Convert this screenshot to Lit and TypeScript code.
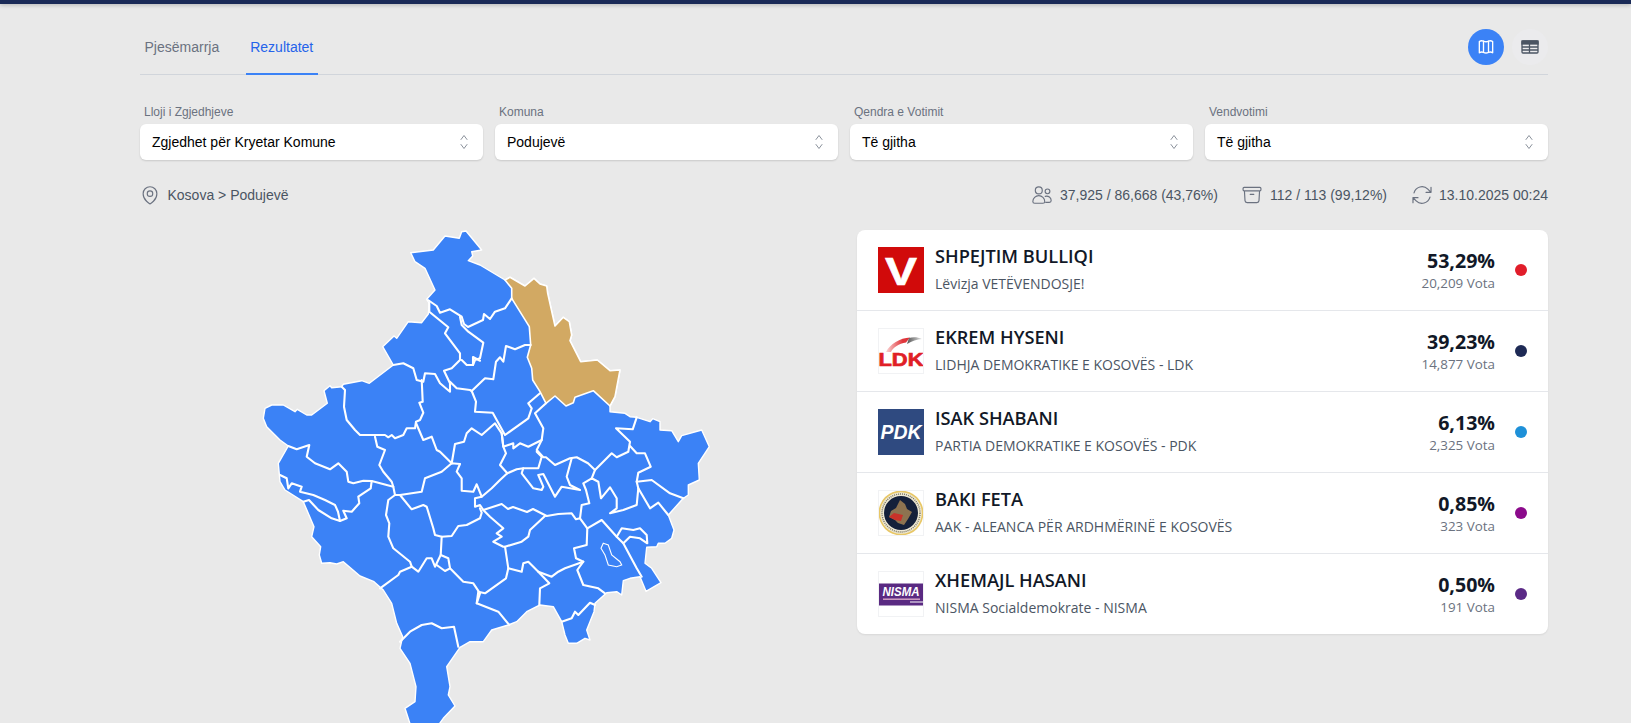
import { LitElement, html, css, svg } from "lit";
import { customElement } from "lit/decorators.js";

const OUTLINE =
  "M461.7,231.7 466,231 481.7,250 471.7,251.7 472.7,256 468.3,260.7 480,265 505,280 510,277.3 525,286 534,278.3 540,284 546.7,286 547.7,293.3 555,326 563.3,317.3 569.3,321.7 571.7,335 570,340.7 580.7,361.7 597.3,360 610,370.7 620,370 615,396.7 610,406 610,411.7 625,413.3 630,416.7 636.7,417.3 650,421.7 652.7,418.7 660,421.7 660,430 671.7,430.7 678.3,441.7 681.7,435.7 701.7,430 709.3,446.7 698.3,463.3 699.3,480 688.3,485 688.3,495 683.3,498.3 668.3,515 674,530 671.7,538.3 665,543.3 658.3,543.3 656.7,546.7 646.7,547.3 645,563.3 651.7,568.3 661,582.7 646,591.3 640,576.7 630,578.3 623.3,580.7 621.7,595 616.7,591.7 606.7,592.7 595,603.3 594,611.7 586.7,630 590,640 585,638.3 576.7,643.3 568.3,643.3 565,635 561.7,621.7 553.3,606.7 540,605 526.7,611.7 516.7,621.7 508.3,625 491.7,630 483.3,641.7 470,641.7 460,647.3 446.7,666.7 450,686.7 448.3,695 455,706 443.3,718.3 435,730 412,730 405,708.3 415,701.7 416,686.7 410,663.3 400,648.3 402.7,636.7 396.7,623.3 391.7,603.3 383.3,590 374,581.7 360,576 343.3,561.7 336.7,564 330,562.7 321.7,563.3 319.3,555 320.7,546.7 311.7,536.7 314,526.7 303.3,501.7 285,490 280,481.7 278.3,463.3 288.3,446 280,440 266.7,426.7 263.3,418.3 265,408.3 271.7,405 283.3,405 295,411.7 297.3,409.3 306.7,415 311.7,415 327.3,403.3 324,390.7 330,385.7 331.7,387.7 341.7,386.7 343.3,384.3 361.7,380.7 369.3,383.3 393.3,365 382.7,346.7 394,336 396.7,338.3 408.3,321.7 421.7,322.7 428.3,314 429.3,303.3 426.7,299.3 435,290 425,268.3 415,261.7 410.7,252.7 433.3,250 445,236 459.3,238.3 Z";

const PODUJEVE =
  "M505,280 510,277.3 525,286 534,278.3 540,284 546.7,286 547.7,293.3 555,326 563.3,317.3 569.3,321.7 571.7,335 570,340.7 580.7,361.7 597.3,360 610,370.7 620,370 615,396.7 610,406 593.3,390.7 575,397.3 573.3,402.7 566,406 555,396 546,403.3 540,391.7 532.7,380 531.7,368.3 527.3,357.3 530.7,345 529.3,326.7 511.7,298.3 511.7,288.3 Z";

// municipality borders, drawn over the silhouette
const BORDERS = [
  "M428,300 436.7,306 440,312.7 450,309.3 461.7,316.7 464,324 468,327 483,320 484,314 490,319 495,311.7 505,308.3 511.7,298.3",
  "M429.3,303 429.3,311.7 448.3,327.3 445,333.3 460,353.3 460,360 451.7,368.3 444,370.7 450,383.3 450,391.7 440,383.3 435,374 425,373.3 423.3,381.7 416.7,380 413.3,368.3 403.3,363.3 393.3,365",
  "M460,316.7 461.7,325 468.3,331.7 483.3,342.7 480,358.3 475,360 473,365 466.7,365 461.7,360",
  "M473,365 473,357 480,360.7",
  "M450,381.7 456.7,388.3 470,390 471.7,391 485,378.3 493.3,379.3 496,361.7 500,357.3 503.3,361.7 506,346 515,349.3 525,345 530.7,345",
  "M471.7,391 476,401.7 475,411.7 492.7,412.7 505,435 528.3,418.3 531.7,408.3 528.3,403.3 540,393.3",
  "M546,403.3 535,413.3 543.3,428.3 541.7,440 528.3,446.7 520,443.3 513.3,448.3 513.3,443.3 503.3,446.7 501.7,433.3 495,423.3 481.7,435 471.7,428.3 466.7,433.3 464,441.7 455,444 451.7,463.3",
  "M541.7,440 536.7,450 543.3,457.3 546,457.3 555,465 570,458.3 576.7,457.3 588,463.3 595,470 611.7,453.3 616.7,457.3 628.3,451.7 630,441.7 616,428.3 632.7,429.3 636.7,417.3",
  "M630,446 636.7,453.3 645,453.3 650.7,466.7 638.3,472.7 636.7,481.7 638.3,488.3 636.7,505 623.3,510 610,513.3 616.7,508.3 616.7,498.3 610,487.3 601,498.3 598.3,481.7 591.7,478.3 583.3,483.3 586,490 589.3,503.3 581.7,505 580,518.3",
  "M595,470 591.7,478.3",
  "M636.7,481.7 651.7,480 670,493.3 683.3,498.3",
  "M638.3,488.3 650,508.3 658.3,502.7 668.3,515",
  "M501.7,433.3 503.3,446.7 506,453.3 500,465 507.3,473.3 500,480 491.7,488.3 481.7,496.7 476.7,484.3 473.3,491.7 461.7,490.7 461.7,478.3 456.7,471.7 460,464 451.7,463.3 441.7,471.7 425,478.3 421.7,491.7 400,495 395,495 388.3,500 386,515 389.3,523.3 388.3,536.7 393.3,548.3 410,561.7 411.7,566.7 400,571.7 398.3,575 380,588.3",
  "M507.3,473.3 516.7,469.3 523.3,468.3 521.7,473.3 533.3,488.3 541.7,490 543.3,486.7 538.3,475 543.3,474 555,496.7 561.7,486.7 580,490 570,485 566.7,476.7 571.7,458.3",
  "M523.3,468.3 538.3,468.3 541.7,456.7 536.7,451.7",
  "M481.7,496.7 475,498.3 475,506.7 480,505 483.3,510 501.7,504 508,509 513,507 527,512 533,509 546.7,516 558.3,514 571.7,513.3 576,519.3 580,518.3 587.3,528.3 601.7,520 616.7,536.7 623.3,543.3 636.7,568.3 641.7,576.7",
  "M587.3,528.3 586.7,545 574,548.3 576,558.3 583.3,561.7 577.3,570 583.3,585 598.3,588.3 605,593.3",
  "M583.3,561.7 565,568.3 558.3,571.7 551.7,576.7 538.3,571.7 528.3,561.7 523.3,563.3 521.7,571.7 508.3,568.3 505,546.7 503.3,546.7 493.3,541.7 501.7,536.7 496.7,533.3 503.3,528.3 490,516.7 483.3,510",
  "M505,546.7 521.7,541.7 528.3,536.7 530,530 545,516",
  "M508.3,568.3 506,578.3 485,593.3 478.3,591.7 476.7,603.3 498.3,611.7 509.3,625",
  "M538.3,571.7 549.3,583.3 540,588.3 539.3,605",
  "M561.7,621.7 571.7,618.3 575,611.7 578.3,615 590,602.7 595,605",
  "M616.7,536.7 621.7,528.3 633.3,530 640,528.3 646.7,535 647.3,543.3 640,538.3 630,536.7 623.3,543.3",
  "M303.3,501.7 309,500 318.3,510 331.7,518.3 340,521 338,511.7 335,505 325,500 313.3,495 300,491.7 301.7,486.7 291.7,483.3 288.3,488.3 286.7,478.3 280,475",
  "M340,521 346.7,518.3 343.3,510.7 351.7,511.7 359.3,503.3 358.3,496.7 370.7,488.3 371.7,481",
  "M288.3,446 296.7,449.3 309.3,445 306.7,456.7 315,463.3 330,469.3 338.3,463.3 346.7,471.7 348.3,481.7 353.3,483.3 363.3,480.7 371.7,481 393.3,486.7 395,495",
  "M375,436.7 377.3,446.7 385,450 379.3,465 383.3,471.7 391.7,481.7 393.3,486.7",
  "M411.7,566.7 418.3,571.7 426.7,558.3 431.7,558.3 435,566.7 440.7,555 441.7,536.7 435,535 433.3,528.3 426.7,506.7 423.3,505 411.7,509.3 400,495",
  "M451.7,463.3 440,451.7 436.7,450 431.7,436.7 423.3,440 416,423",
  "M441.7,536.7 451.7,536 458.3,526 466.7,525 480,518.3 481.7,512.7 480,508.3",
  "M440.7,555 448.3,558.3 450,568.3 445,571 436.7,565",
  "M450,568.3 463.3,581.7 473.3,583.3 480,593.3 476.7,603.3",
  "M421.7,380 422.7,401.7 419.3,402.7 423.3,412.7 420,420 416,421.7 415,428.3 406.7,428.3 403.3,435 395,438.3 391.7,435 388.3,437.3 385,435 360,435 355,430 346.7,420 344,406.7 345,390 341.7,386.7",
  "M400,641.7 410,631.7 421.7,625 431.7,623.3 441.7,628.3 454,626.7 458.3,646.7",
];

const LAKE =
  "M603.3,543.3 608.3,545 611.7,555 620,561.7 621.7,565 616.7,566.7 608.3,565 605,555 601,548.3 Z";

@customElement("kosovo-map")
class KosovoMap extends LitElement {
  static styles = css`
    :host {
      display: block;
      height: 493px;
    }
    svg {
      display: block;
    }
    .land {
      fill: #3b82f6;
      stroke: #fff;
      stroke-width: 1.4;
      stroke-linejoin: round;
    }
    .selected {
      fill: #d2a963;
      stroke: #fff;
      stroke-width: 1.6;
      stroke-linejoin: round;
    }
    .border {
      fill: none;
      stroke: #fff;
      stroke-width: 2.1;
      stroke-linejoin: round;
      stroke-linecap: round;
    }
    .lake {
      fill: none;
      stroke: #fff;
      stroke-width: 1.1;
    }
  `;

  render() {
    return html`<svg width="705" height="493" viewBox="140 230 705 493">
      <path class="land" d=${OUTLINE}></path>
      <path class="selected" d=${PODUJEVE}></path>
      ${BORDERS.map((d) => svg`<path class="border" d=${d}></path>`)}
      <path class="lake" d=${LAKE}></path>
    </svg>`;
  }
}

const logoV = svg`<rect width="46" height="46" fill="#d10a0a"></rect>
  <text x="23" y="38" text-anchor="middle" textLength="32" lengthAdjust="spacingAndGlyphs" font-family="Liberation Sans" font-weight="700" font-size="39" fill="#fff" stroke="#fff" stroke-width="0.6">V</text>`;

const logoLdk = svg`<defs><linearGradient id="sw" x1="0" x2="1" y1="0" y2="0">
    <stop offset="0" stop-color="#fbd5d5"></stop><stop offset="0.7" stop-color="#e0353b"></stop>
  </linearGradient><linearGradient id="sg" x1="0" x2="1" y1="0" y2="0">
    <stop offset="0" stop-color="#555"></stop><stop offset="1" stop-color="#e0e0e0"></stop>
  </linearGradient></defs>
  <path d="M8,24 C12,16 22,10 32,9.5 L28,14.5 C21,15.5 15,19.5 13,24 Z" fill="url(#sw)"></path>
  <path d="M31,10 C35,8.5 40,9 44,11 C39,11.5 34,13 29,16 Z" fill="url(#sg)"></path>
  <text x="23" y="37.7" text-anchor="middle" textLength="45" lengthAdjust="spacingAndGlyphs" font-family="Liberation Sans" font-weight="700" font-size="19" fill="#e01f26" stroke="#e01f26" stroke-width="0.7">LDK</text>`;

const logoPdk = svg`<rect width="46" height="46" fill="#2f4a80"></rect>
  <text x="23" y="30" text-anchor="middle" textLength="41" lengthAdjust="spacingAndGlyphs" font-family="Liberation Sans" font-style="italic" font-weight="700" font-size="20" fill="#fff">PDK</text>`;

const logoAak = svg`<circle cx="23" cy="23" r="22.5" fill="#e8c766"></circle>
  <circle cx="23" cy="23" r="20.8" fill="#efe9d4"></circle>
  <circle cx="23" cy="23" r="19" fill="none" stroke="#77735f" stroke-width="1.4" stroke-dasharray="1 1"></circle>
  <circle cx="23" cy="23" r="17" fill="#14203a"></circle>
  <polygon points="22,10 27,14 29,19 34,22 30,29 26,35 20,33 17,30 11,27 13,21 18,18" fill="#8d7350"></polygon>
  <polygon points="11,27 16,23 25,25 23,31 17,30" fill="#c8322a"></polygon>`;

const logoNisma = svg`<rect y="12.5" width="46" height="22" fill="#5a2a82"></rect>
  <text x="23" y="25" text-anchor="middle" textLength="37" lengthAdjust="spacingAndGlyphs" font-family="Liberation Sans" font-style="italic" font-weight="700" font-size="12.5" fill="#fff">NISMA</text>
  <rect x="5" y="27.5" width="37" height="1.4" fill="#d9a6c8"></rect>
  <rect x="32" y="30.5" width="14" height="1" fill="#fff"></rect>`;

interface Candidate {
  name: string;
  party: string;
  percent: string;
  votes: string;
  color: string;
  logo: unknown;
  framed: boolean;
}

const CANDIDATES: Candidate[] = [
  { name: "SHPEJTIM BULLIQI", party: "Lëvizja VETËVENDOSJE!", percent: "53,29%", votes: "20,209 Vota", color: "#e11d2a", logo: logoV, framed: false },
  { name: "EKREM HYSENI", party: "LIDHJA DEMOKRATIKE E KOSOVËS - LDK", percent: "39,23%", votes: "14,877 Vota", color: "#1e2a55", logo: logoLdk, framed: true },
  { name: "ISAK SHABANI", party: "PARTIA DEMOKRATIKE E KOSOVËS - PDK", percent: "6,13%", votes: "2,325 Vota", color: "#1e90d8", logo: logoPdk, framed: false },
  { name: "BAKI FETA", party: "AAK - ALEANCA PËR ARDHMËRINË E KOSOVËS", percent: "0,85%", votes: "323 Vota", color: "#8b0a8b", logo: logoAak, framed: true },
  { name: "XHEMAJL HASANI", party: "NISMA Socialdemokrate - NISMA", percent: "0,50%", votes: "191 Vota", color: "#5b2a86", logo: logoNisma, framed: true },
];

const FILTERS = [
  { label: "Lloji i Zgjedhjeve", value: "Zgjedhet për Kryetar Komune" },
  { label: "Komuna", value: "Podujevë" },
  { label: "Qendra e Votimit", value: "Të gjitha" },
  { label: "Vendvotimi", value: "Të gjitha" },
];

const chevrons = html`<svg width="14" height="20" viewBox="0 0 14 20" fill="none" stroke="#8b929c" stroke-width="1" stroke-linecap="round" stroke-linejoin="round">
  <path d="M4 7.5 7 3.5l3 4"></path><path d="M4 12.5 7 16.5l3-4"></path>
</svg>`;

@customElement("app-root")
export class AppRoot extends LitElement {
  static styles = css`
    :host {
      display: block;
      height: 723px;
      overflow: hidden;
      background: #e9e9e9;
      font-family: "Liberation Sans", Arial, sans-serif;
      color: #374151;
    }
    .topbar {
      height: 4px;
      background: #1a2a57;
      box-shadow: 0 1px 4px rgba(0, 0, 0, 0.25);
    }
    .page {
      padding: 0 83px 0 140px;
    }
    .tabs {
      height: 71px;
      display: flex;
      align-items: stretch;
      justify-content: space-between;
      border-bottom: 1px solid #d1d5db;
      box-sizing: border-box;
    }
    .tablist {
      display: flex;
      gap: 22px;
    }
    .tab {
      padding: 20px 4.5px 4px;
      display: flex;
      align-items: center;
      font-size: 14px;
      color: #6b7280;
      border-bottom: 2px solid transparent;
      margin-bottom: -1px;
    }
    .tab.active {
      color: #2563eb;
      border-bottom-color: #3b82f6;
    }
    .toggle {
      display: flex;
      gap: 8px;
      padding-top: 25px;
    }
    .round {
      width: 36px;
      height: 36px;
      border-radius: 50%;
      display: flex;
      align-items: center;
      justify-content: center;
      background: #ebebed;
      color: #4b5563;
    }
    .round.on {
      background: #3b82f6;
      color: #fff;
    }
    .filters {
      display: grid;
      grid-template-columns: repeat(4, 1fr);
      gap: 12px;
      margin-top: 30px;
    }
    .filter label {
      display: block;
      font-size: 12px;
      line-height: 14px;
      color: #6b7280;
      padding-left: 4px;
      margin-bottom: 5px;
    }
    .select {
      height: 36px;
      box-sizing: border-box;
      background: #fff;
      border-radius: 6px;
      box-shadow: 0 1px 2px rgba(0, 0, 0, 0.14);
      display: flex;
      align-items: center;
      justify-content: space-between;
      padding: 0 12px;
      font-size: 14px;
      color: #000;
    }
    .info {
      display: flex;
      align-items: center;
      justify-content: space-between;
      height: 18px;
      margin-top: 26px;
      font-size: 14px;
      color: #4b5563;
    }
    .crumb,
    .stat {
      display: flex;
      align-items: center;
    }
    .crumb {
      gap: 7px;
      margin-left: -1.5px;
    }
    .stats {
      display: flex;
      gap: 23px;
    }
    .stat {
      gap: 7px;
    }
    .stat.tight {
      gap: 5px;
    }
    .content {
      display: grid;
      grid-template-columns: 705px 691px;
      gap: 12px;
      margin-top: 26px;
    }
    .card {
      background: #fff;
      border-radius: 8px;
      box-shadow: 0 1px 2px rgba(0, 0, 0, 0.08);
      align-self: start;
    }
    .row {
      display: flex;
      align-items: center;
      height: 81px;
      box-sizing: border-box;
      padding: 0 21px;
      border-bottom: 1px solid #e5e7eb;
      font-family: "Open Sans", sans-serif;
    }
    .row:last-child {
      height: 80px;
      border-bottom: none;
    }
    .logo {
      width: 46px;
      height: 46px;
      flex: none;
      display: block;
    }
    .logo.framed {
      outline: 1px solid #f1f2f4;
      outline-offset: -1px;
    }
    .who {
      margin-left: 11px;
      flex: 1;
    }
    .name {
      font-size: 18.2px;
      line-height: 24px;
      font-weight: 600;
      color: #111827;
      margin-top: -4px;
    }
    .party {
      font-size: 14px;
      line-height: 18px;
      margin-top: 7px;
      color: #4b5563;
    }
    .nums {
      text-align: right;
    }
    .pct {
      font-size: 19.6px;
      line-height: 24px;
      font-weight: 700;
      color: #111827;
      margin-top: 1px;
    }
    .votes {
      font-size: 13.4px;
      line-height: 18px;
      margin-top: 1px;
      color: #6b7280;
    }
    .dot {
      width: 12px;
      height: 12px;
      border-radius: 50%;
      margin-left: 20px;
      flex: none;
    }
  `;

  render() {
    return html`
      <div class="topbar"></div>
      <div class="page">
        <div class="tabs">
          <div class="tablist">
            <div class="tab">Pjesëmarrja</div>
            <div class="tab active">Rezultatet</div>
          </div>
          <div class="toggle">
            <div class="round on">
              <svg width="20" height="20" viewBox="0 0 24 24" fill="none" stroke="currentColor" stroke-width="1.6" stroke-linecap="round" stroke-linejoin="round">
                <path d="M4 5.5C6 4 7 4 9 5c2 1 4 1 6 0 2-1 3-1 5 .5V19c-2-1.5-3-1.5-5-.5-2 1-4 1-6 0-2-1-3-1-5 .5Z"></path>
                <path d="M9 5v13.500M15 5v13.500"></path>
              </svg>
            </div>
            <div class="round">
              <svg width="20" height="20" viewBox="0 0 20 20" fill="none" stroke="currentColor" stroke-width="1.3">
                <rect x="2" y="4" width="16" height="12" rx="1"></rect>
                <rect x="2" y="4" width="16" height="3" fill="currentColor"></rect>
                <path d="M2 10h16M2 13h16M9.500 7v9"></path>
              </svg>
            </div>
          </div>
        </div>

        <div class="filters">
          ${FILTERS.map(
            (f) => html`<div class="filter">
              <label>${f.label}</label>
              <div class="select"><span>${f.value}</span>${chevrons}</div>
            </div>`
          )}
        </div>

        <div class="info">
          <div class="crumb">
            <svg width="22" height="22" viewBox="0 0 24 24" fill="none" stroke="#6b7280" stroke-width="1.25" stroke-linecap="round" stroke-linejoin="round">
              <path d="M15 10.500a3 3 0 1 1-6 0 3 3 0 0 1 6 0Z"></path>
              <path d="M19.500 10.500c0 7.142-7.500 11.250-7.500 11.250S4.500 17.642 4.500 10.500a7.500 7.500 0 1 1 15 0Z"></path>
            </svg>
            <span>Kosova &gt; Podujevë</span>
          </div>
          <div class="stats">
            <div class="stat">
              <svg width="22" height="22" viewBox="0 0 24 24" fill="none" stroke="#6b7280" stroke-width="1.25" stroke-linecap="round" stroke-linejoin="round">
                <circle cx="8.500" cy="7" r="3.800"></circle>
                <circle cx="18" cy="8" r="2.600"></circle>
                <path d="M2 19c0-3.500 3-6.300 6.500-6.300S15 15.500 15 19c0 1.300-1 2-2 2H4c-1 0-2-.7-2-2Z"></path>
                <path d="M15.500 13.500c3.500-1 6.500 1.500 6.500 4.500 0 1.300-.9 2-1.900 2H16"></path>
              </svg>
              <span>37,925 / 86,668 (43,76%)</span>
            </div>
            <div class="stat">
              <svg width="22" height="22" viewBox="0 0 24 24" fill="none" stroke="#6b7280" stroke-width="1.25" stroke-linecap="round" stroke-linejoin="round">
                <path d="m20.250 7.500-.625 10.632a2.250 2.250 0 0 1-2.247 2.118H6.622a2.250 2.250 0 0 1-2.247-2.118L3.750 7.500M10 11.250h4M3.375 7.500h17.250c.621 0 1.125-.504 1.125-1.125v-1.500c0-.621-.504-1.125-1.125-1.125H3.375c-.621 0-1.125.504-1.125 1.125v1.500c0 .621.504 1.125 1.125 1.125Z"></path>
              </svg>
              <span>112 / 113 (99,12%)</span>
            </div>
            <div class="stat tight">
              <svg width="24" height="24" viewBox="0 0 24 24" fill="none" stroke="#6b7280" stroke-width="1.2" stroke-linecap="round" stroke-linejoin="round">
                <path d="M16.023 9.348h4.992v-.001M2.985 19.644v-4.992m0 0h4.992m-4.993 0 3.181 3.183a8.250 8.250 0 0 0 13.803-3.700M4.031 9.865a8.250 8.250 0 0 1 13.803-3.700l3.181 3.182m0-4.991v4.990"></path>
              </svg>
              <span>13.10.2025 00:24</span>
            </div>
          </div>
        </div>

        <div class="content">
          <kosovo-map></kosovo-map>
          <div class="card">
            ${CANDIDATES.map(
              (c) => html`<div class="row">
                <svg class="logo ${c.framed ? "framed" : ""}" viewBox="0 0 46 46">${c.logo}</svg>
                <div class="who">
                  <div class="name">${c.name}</div>
                  <div class="party">${c.party}</div>
                </div>
                <div class="nums">
                  <div class="pct">${c.percent}</div>
                  <div class="votes">${c.votes}</div>
                </div>
                <div class="dot" style="background:${c.color}"></div>
              </div>`
            )}
          </div>
        </div>
      </div>
    `;
  }
}
